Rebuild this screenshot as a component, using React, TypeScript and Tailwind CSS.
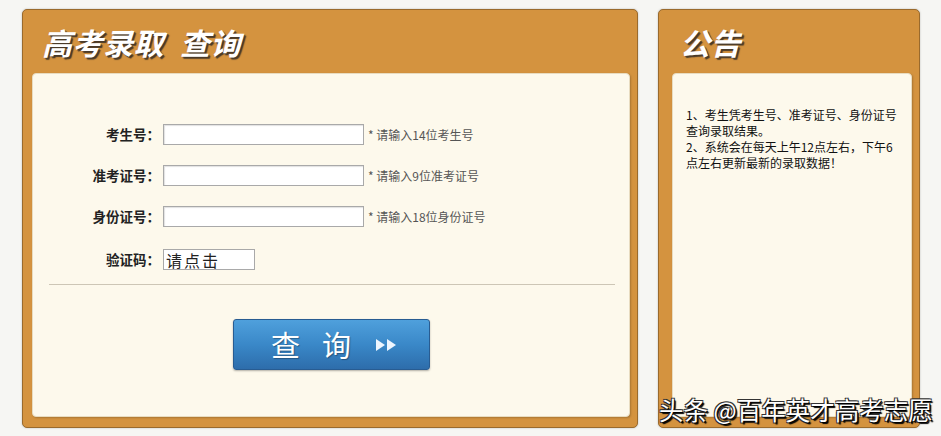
import React from "react";

const cjk = { fontFamily: '"Noto Sans CJK SC", "Noto Sans", sans-serif' };

const rows = [
  { label: "考生号：", hint: "* 请输入14位考生号" },
  { label: "准考证号：", hint: "* 请输入9位准考证号" },
  { label: "身份证号：", hint: "* 请输入18位身份证号" },
];

const Title = ({ children }: { children: React.ReactNode }) => (
  <h1
    className="text-[30px] font-bold italic leading-none tracking-[0.5px] text-white [text-shadow:2px_2px_1px_#4a3a28,1px_1px_0_#6b5235]"
    style={cjk}
  >
    {children}
  </h1>
);

export default function App() {
  return (
    <div className="relative flex h-[436px] w-[941px] gap-5 bg-[#f6f6f3] pl-[22px] pt-[9px]" style={cjk}>
      {/* left panel */}
      <div className="flex h-[419px] w-[616px] flex-col rounded-[5px] border border-[#9a6a2c] bg-[#d4933f] pb-[10px] pl-[9px] pr-[7px] shadow-[0_0_2px_rgba(0,0,0,0.25)]">
        <div className="flex h-[63px] items-center pl-[10px]">
          <Title>
            高考录取<span className="inline-block w-[16px]" />查询
          </Title>
        </div>
        <div className="flex flex-1 flex-col rounded-[4px] border border-[#e8dcc0] bg-[#fdf9ec] pt-[50px] shadow-[1px_1px_2px_rgba(0,0,0,0.2)]">
          <div className="flex flex-col gap-[20px]">
            {rows.map((r) => (
              <div key={r.label} className="flex h-[21px] items-center">
                <span className="w-[127px] text-right text-[13.5px] font-bold text-[#222]">{r.label}</span>
                <input className="ml-[3px] h-[21px] w-[201px] border border-[#a9a9a9] bg-white shadow-[inset_1px_1px_1px_rgba(0,0,0,0.12)] outline-none" />
                <span className="ml-[4px] text-[12px] text-[#555]">{r.hint}</span>
              </div>
            ))}
            <div className="mt-[2px] flex h-[21px] items-center">
              <span className="w-[127px] text-right text-[13.5px] font-bold text-[#222]">验证码：</span>
              <div className="ml-[3px] flex h-[21px] w-[92px] items-center border border-[#a9a9a9] bg-white pl-[2px] text-[16px] leading-none tracking-[2px] text-[#222]">
                请点击
              </div>
            </div>
          </div>
          <div className="ml-[16px] mr-[14px] mt-[14px] h-px bg-[#cdc6b6]" />
          <div className="mt-[34px] flex justify-center">
            <button className="flex h-[51px] w-[197px] items-center justify-center rounded-[3px] border border-[#285c92] bg-gradient-to-b from-[#4fa0dc] via-[#3a88c8] to-[#2d6dab] pl-[8px] text-white shadow-[0_1px_2px_rgba(0,0,0,0.3)]">
              <span className="text-[29px] font-normal leading-none tracking-[22px] [text-shadow:1px_1px_1px_rgba(0,0,0,0.3)]">查询</span>
              <svg className="ml-[2px] h-[16px] w-[24px]" viewBox="0 0 24 16">
                <path d="M1 2 L10 8 L1 14 Z" fill="#eef6ff" />
                <path d="M12 2 L21 8 L12 14 Z" fill="#eef6ff" />
              </svg>
            </button>
          </div>
        </div>
      </div>

      {/* right panel */}
      <div className="flex h-[419px] w-[262px] flex-col rounded-[5px] border border-[#9a6a2c] bg-[#d4933f] pb-[10px] pl-[13px] pr-[7px] shadow-[0_0_2px_rgba(0,0,0,0.25)]">
        <div className="flex h-[63px] items-center pl-[8px]">
          <Title>公告</Title>
        </div>
        <div className="flex-1 rounded-[4px] border border-[#e8dcc0] bg-[#fdf9ec] pl-[13px] pt-[33px] text-[12px] leading-[16px] text-[#111] shadow-[1px_1px_2px_rgba(0,0,0,0.2)]">
          <p>1、考生凭考生号、准考证号、身份证号</p>
          <p>查询录取结果。</p>
          <p>2、系统会在每天上午12点左右，下午6</p>
          <p>点左右更新最新的录取数据！</p>
        </div>
      </div>

      {/* watermark */}
      <div className="absolute left-[659px] top-[398px] text-[24.5px] leading-none text-white [text-shadow:1px_1px_0_#000,-1px_-1px_0_#333,1px_-1px_0_#333,-1px_1px_0_#333,2px_2px_1px_#000]">
        头条 @百年英才高考志愿
      </div>
    </div>
  );
}
